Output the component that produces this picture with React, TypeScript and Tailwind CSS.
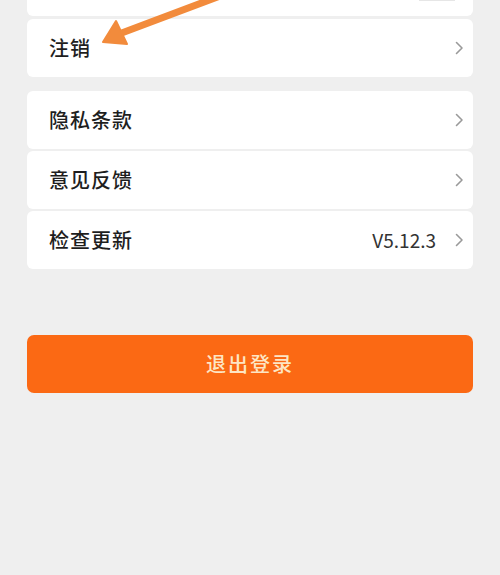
import React from 'react';

const Chevron = () => (
    <svg width="9" height="14" viewBox="0 0 9 14" fill="none">
        <path d="M1.5 1.5 L7 7 L1.5 12.5" stroke="#9a9a9a" strokeWidth="1.6" strokeLinecap="round" strokeLinejoin="round"/>
    </svg>
)

function Row({label, value}: {label: string, value?: string}) {
    return (
        <div className="flex items-center h-[58px] bg-white rounded-[6px] pl-[22px] pr-[9px]">
            <span className="text-[20px] text-[#1e1e1e] font-medium tracking-[1px]">{label}</span>
            <span className="ml-auto text-[19px] text-[#333] mr-[19px]">{value}</span>
            <Chevron/>
        </div>
    )
}

export default function App() {
    return (
        <div className="relative w-[500px] h-[575px] bg-[#efefef] overflow-hidden px-[27px]"
             style={{fontFamily: '"Noto Sans CJK SC", "Noto Sans", sans-serif'}}>
            <div className="h-[16px] -mt-[10px] pt-[10px] bg-white rounded-b-[6px] box-content relative">
                <div className="absolute right-[18px] top-[9px] w-[36px] h-[2px] bg-[#e6e6e6]"/>
            </div>
            <div className="mt-[3px]">
                <Row label="注销"/>
            </div>
            <div className="mt-[14px] flex flex-col gap-[2px]">
                <Row label="隐私条款"/>
                <Row label="意见反馈"/>
                <Row label="检查更新" value="V5.12.3"/>
            </div>
            <button className="mt-[66px] w-full h-[58px] rounded-[7px] bg-[#fb6914] text-[#fde6c4] text-[20px] font-medium tracking-[2px]">
                退出登录
            </button>
            <svg className="absolute left-0 top-0" width="500" height="80" viewBox="0 0 500 80">
                <line x1="236" y1="-10" x2="119" y2="34" stroke="#f28b3c" strokeWidth="7" strokeLinecap="round"/>
                <polygon points="103,42 116,21 127,44" fill="#f28b3c" stroke="#f28b3c" strokeWidth="2" strokeLinejoin="round"/>
            </svg>
        </div>
    )
}
